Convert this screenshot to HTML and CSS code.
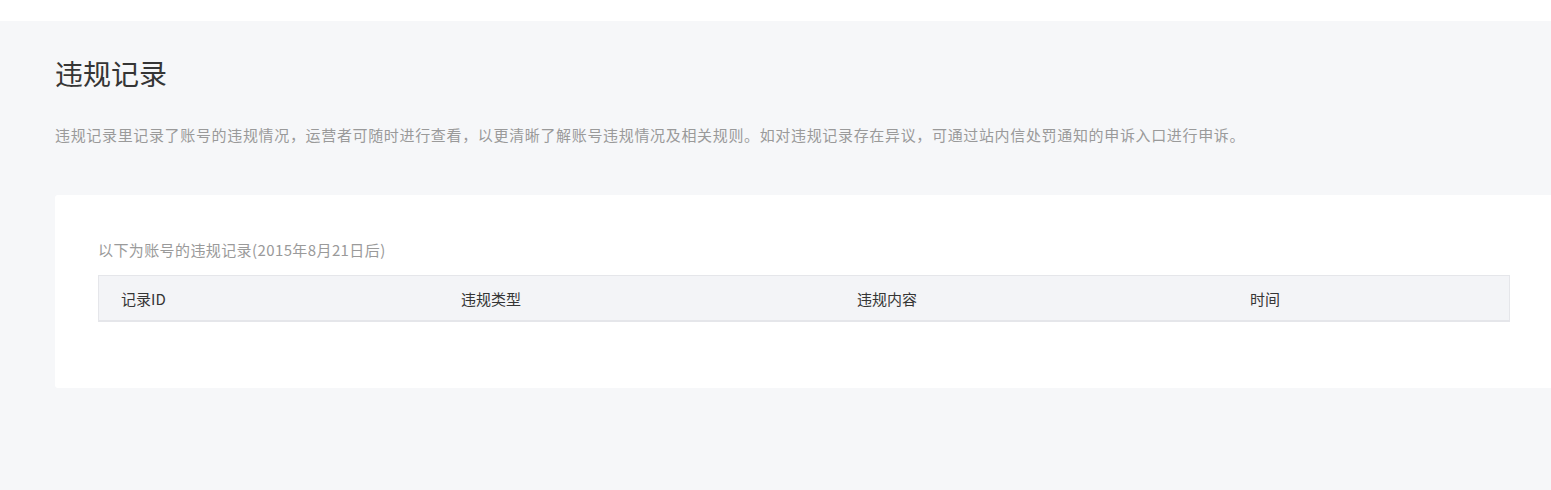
FILE: index.html
```html
<!DOCTYPE html>
<html lang="zh-CN">
<head>
    <meta charset="UTF-8">
    <meta name="viewport" content="width=device-width, initial-scale=1.0">
    <title>违规记录</title>
    <link rel="stylesheet" href="styles.css">
</head>
<body>
    <div class="top-bar"></div>
    <div class="main">
        <h2 class="page-title">违规记录</h2>
        <p class="page-desc">违规记录里记录了账号的违规情况，运营者可随时进行查看，以更清晰了解账号违规情况及相关规则。如对违规记录存在异议，可通过站内信处罚通知的申诉入口进行申诉。</p>

        <div class="record-card">
            <p class="record-tip">以下为账号的违规记录(2015年8月21日后)</p>
            <table class="record-table">
                <thead>
                    <tr>
                        <th class="col-id">记录ID</th>
                        <th class="col-type">违规类型</th>
                        <th class="col-content">违规内容</th>
                        <th class="col-time">时间</th>
                    </tr>
                </thead>
                <tbody></tbody>
            </table>
        </div>
    </div>
</body>
</html>
```

FILE: styles.css
```css
html, body {
    margin: 0;
    padding: 0;
}
body {
    background: #f6f7f9;
    font-family: "Noto Sans CJK SC", "Noto Sans", sans-serif;
    color: #353535;
}
.top-bar {
    height: 21px;
    background: #fff;
}
.main {
    padding: 32px 0 0 55px;
}
.page-title {
    margin: 0;
    font-size: 28px;
    font-weight: normal;
    line-height: 40px;
    color: #353535;
}
.page-desc {
    margin: 31px 0 0;
    font-size: 15px;
    line-height: 22px;
    color: #9a9a9a;
    letter-spacing: 0.66px;
}
.record-card {
    margin-top: 49px;
    background: #fff;
    border-radius: 3px 0 0 3px;
    padding: 44px 41px 66px 43px;
}
.record-tip {
    margin: 0 0 14px;
    font-size: 15px;
    line-height: 22px;
    letter-spacing: 0.4px;
    color: #9a9a9a;
}
.record-table {
    width: 1412px;
    border-collapse: collapse;
    background: #f3f4f7;
    border: 1px solid #e5e6ea;
    border-bottom: 2px solid #e5e6ea;
}
.record-table th {
    text-align: left;
    font-weight: normal;
    font-size: 15px;
    height: 44px;
    padding: 0 0 0 22px;
    color: #353535;
}
.col-id { width: 318px; }
.col-type { width: 374px; }
.col-content { width: 371px; }
```
